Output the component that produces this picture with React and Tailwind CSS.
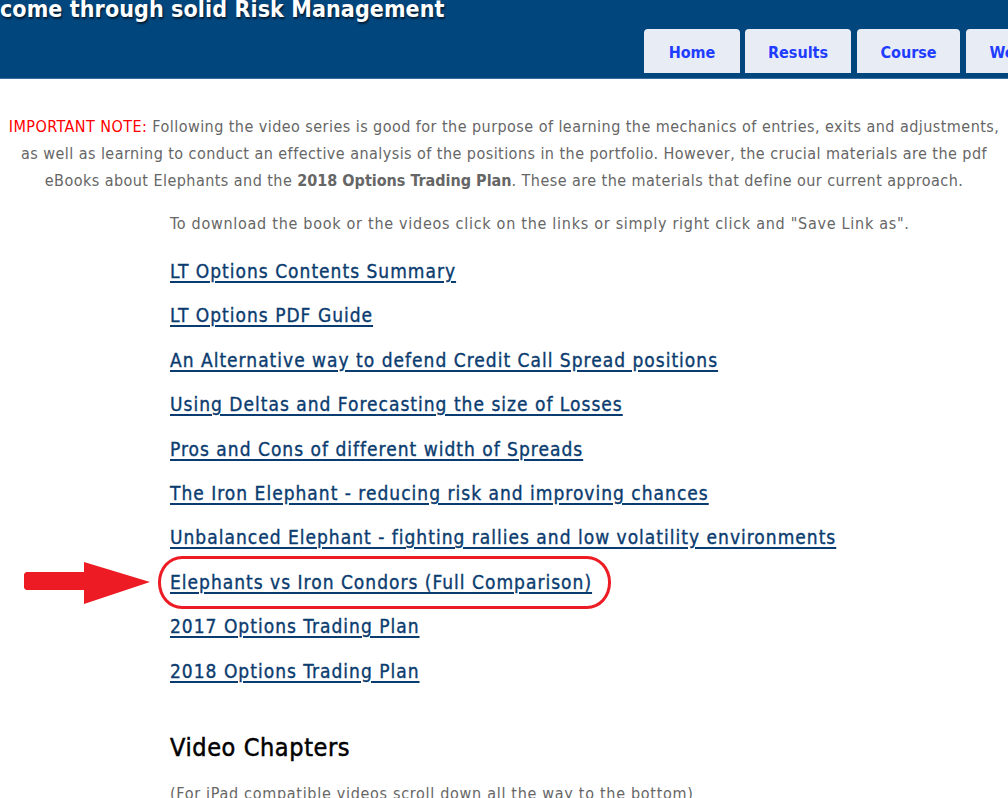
import React from 'react';

const links = [
  'LT Options Contents Summary',
  'LT Options PDF Guide',
  'An Alternative way to defend Credit Call Spread positions',
  'Using Deltas and Forecasting the size of Losses',
  'Pros and Cons of different width of Spreads',
  'The Iron Elephant - reducing risk and improving chances',
  'Unbalanced Elephant - fighting rallies and low volatility environments',
  'Elephants vs Iron Condors (Full Comparison)',
  '2017 Options Trading Plan',
  '2018 Options Trading Plan',
];

const tabs = [
  { label: 'Home', cls: 'w-[96px]' },
  { label: 'Results', cls: 'w-[106px] ml-[5px]' },
  { label: 'Course', cls: 'w-[103px] ml-[6px]' },
  { label: 'Webinars', cls: 'w-[123px] ml-[6px]' },
];

export default function App() {
  return (
    <div className="relative h-[798px] w-[1008px] overflow-hidden bg-white font-['DejaVu_Sans_Condensed','DejaVu_Sans',sans-serif]">
      {/* Header */}
      <header className="h-[79px] overflow-hidden border-b border-[#3b6e9e] bg-[#02467e]">
        <div className="mt-[-6px] whitespace-nowrap text-[23px] font-bold leading-[30px] tracking-[0.1px] text-white [text-shadow:1px_2px_2px_rgba(0,0,0,0.6)]">
          come through solid Risk Management
        </div>
        <nav className="mt-[5px] flex pl-[644px]">
          {tabs.map((t) => (
            <a
              key={t.label}
              className={`${t.cls} flex h-[44px] shrink-0 items-center justify-center rounded-t-[4px] bg-[#e8edf5] pt-[3px] text-[16px] font-bold text-[#1f3dff]`}
            >
              {t.label}
            </a>
          ))}
        </nav>
      </header>

      {/* Note */}
      <p className="mt-[34px] text-center text-[16px] leading-[27px] tracking-[0.45px] text-[#666666]">
        <span className="text-[#ff0000]">IMPORTANT NOTE:</span> Following the video series is good for the purpose of learning the mechanics of entries, exits and adjustments,
        <br />
        as well as learning to conduct an effective analysis of the positions in the portfolio. However, the crucial materials are the pdf
        <br />
        eBooks about Elephants and the <b className="tracking-normal">2018 Options Trading Plan</b>. These are the materials that define our current approach.
      </p>

      <div className="pl-[170px]">
        <p className="mt-[16px] text-[16px] leading-[27px] tracking-[0.72px] text-[#666666]">
          To download the book or the videos click on the links or simply right click and "Save Link as".
        </p>

        <ul className="mt-[12px] flex flex-col">
          {links.map((l) => (
            <li key={l} className="h-[44.4px] text-[19px] leading-[44px] tracking-[1px]">
              <a className="text-[#0b3c6f] underline decoration-2 underline-offset-[3px] [-webkit-text-stroke:0.35px_#0b3c6f]">{l}</a>
            </li>
          ))}
        </ul>

        <h2 className="mt-[39px] text-[25px] leading-[32px] tracking-[0.6px] text-black [-webkit-text-stroke:0.5px_#000]">Video Chapters</h2>
        <p className="mt-[16px] text-[16px] leading-[27px] tracking-[0.7px] text-[#666666]">
          (For iPad compatible videos scroll down all the way to the bottom)
        </p>
      </div>

      {/* Annotation: arrow + circle */}
      <svg className="absolute left-[24px] top-[562px]" width="128" height="44" viewBox="0 0 128 44">
        <polygon points="2,10 60,10 60,0 126,20 60,42 60,28 2,28 0,26 0,12" fill="#ed1c24" />
      </svg>
      <div className="absolute left-[158px] top-[556px] h-[53px] w-[453px] rounded-[24px/26px] border-[3px] border-[#ed1c24]" />
    </div>
  );
}
